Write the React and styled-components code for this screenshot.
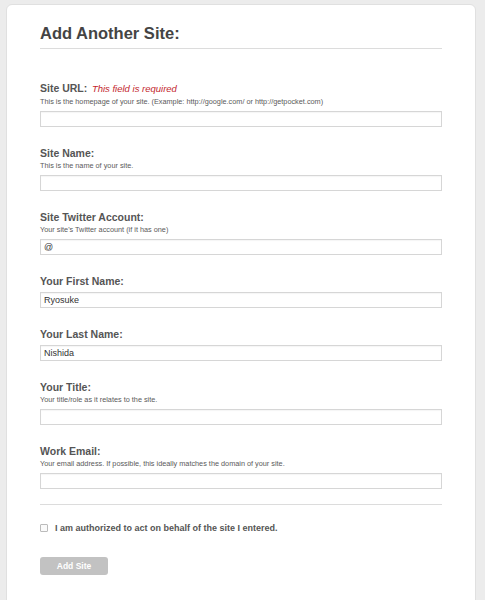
import React from "react";
import styled, { createGlobalStyle } from "styled-components";

const GlobalStyle = createGlobalStyle`
  html, body {
    margin: 0;
    padding: 0;
    background: #ececec;
  }
  body {
    font-family: "Liberation Sans", Arial, sans-serif;
    color: #444;
  }
`;

const Page = styled.div`
  padding: 4px 9px 0 6px;
  height: 596px;
  overflow: hidden;
`;

const Card = styled.div`
  background: #fff;
  border: 1px solid #e0e0e0;
  border-radius: 6px;
  padding: 17px 33px 40px 33px;
  min-height: 620px;
`;

const Title = styled.h1`
  margin: 0;
  font-size: 16.5px;
  line-height: 22px;
  font-weight: bold;
  color: #444;
`;

const Divider = styled.hr`
  border: 0;
  border-top: 1px solid #dcdcdc;
  margin: ${(p) => p.$top || 0}px 0 ${(p) => p.$bottom || 0}px;
`;

const Field = styled.div`
  margin-bottom: 19px;
`;

const Label = styled.label`
  display: block;
  font-size: 10.5px;
  line-height: 14px;
  font-weight: bold;
  color: #555;
  margin-bottom: ${(p) => (p.$hasHelp ? 0 : 4)}px;
`;

const Required = styled.em`
  color: #c3262d;
  font-weight: normal;
  font-size: 9.5px;
  margin-left: 2px;
`;

const Help = styled.div`
  font-size: 7.3px;
  line-height: 10px;
  color: #5a5a5a;
  margin: 1px 0 4px;
`;

const Input = styled.input`
  display: block;
  box-sizing: border-box;
  width: 100%;
  height: 16px;
  border: 1px solid #d6d6d6;
  box-shadow: inset 0 1px 1px rgba(0, 0, 0, 0.04);
  padding: 0 3px;
  font-family: "Liberation Sans", Arial, sans-serif;
  font-size: 9px;
  color: #333;
  background: #fff;
  outline: none;
`;

const CheckRow = styled.label`
  display: flex;
  align-items: center;
  gap: 7px;
  font-size: 9px;
  font-weight: bold;
  color: #555;
  margin-bottom: 24px;
`;

const Box = styled.span`
  width: 6px;
  height: 6px;
  border: 1px solid #bbb;
  border-radius: 1px;
  background: #fafafa;
`;

const Button = styled.button`
  display: block;
  box-sizing: border-box;
  width: 68px;
  height: 18px;
  border: 0;
  border-radius: 3px;
  background: #c2c2c2;
  color: #fff;
  font-family: "Liberation Sans", Arial, sans-serif;
  font-size: 8.5px;
  font-weight: bold;
  padding: 0;
`;

const fields = [
  {
    label: "Site URL:",
    required: true,
    help: "This is the homepage of your site. (Example: http://google.com/ or http://getpocket.com)",
  },
  { label: "Site Name:", help: "This is the name of your site." },
  {
    label: "Site Twitter Account:",
    help: "Your site's Twitter account (if it has one)",
    value: "@",
  },
  { label: "Your First Name:", value: "Ryosuke" },
  { label: "Your Last Name:", value: "Nishida" },
  { label: "Your Title:", help: "Your title/role as it relates to the site." },
  {
    label: "Work Email:",
    help: "Your email address. If possible, this ideally matches the domain of your site.",
  },
];

const App = () => {
  return (
    <Page>
      <GlobalStyle />
      <Card>
        <Title>Add Another Site:</Title>
        <Divider $top={4} $bottom={32} />
        {fields.map((f) => (
          <Field key={f.label}>
            <Label $hasHelp={!!f.help}>
              {f.label}
              {f.required && <Required> This field is required</Required>}
            </Label>
            {f.help && <Help>{f.help}</Help>}
            <Input defaultValue={f.value || ""} />
          </Field>
        ))}
        <Divider $top={-4} $bottom={18} />
        <CheckRow>
          <Box />I am authorized to act on behalf of the site I entered.
        </CheckRow>
        <Button>Add Site</Button>
      </Card>
    </Page>
  );
};

export default App;
